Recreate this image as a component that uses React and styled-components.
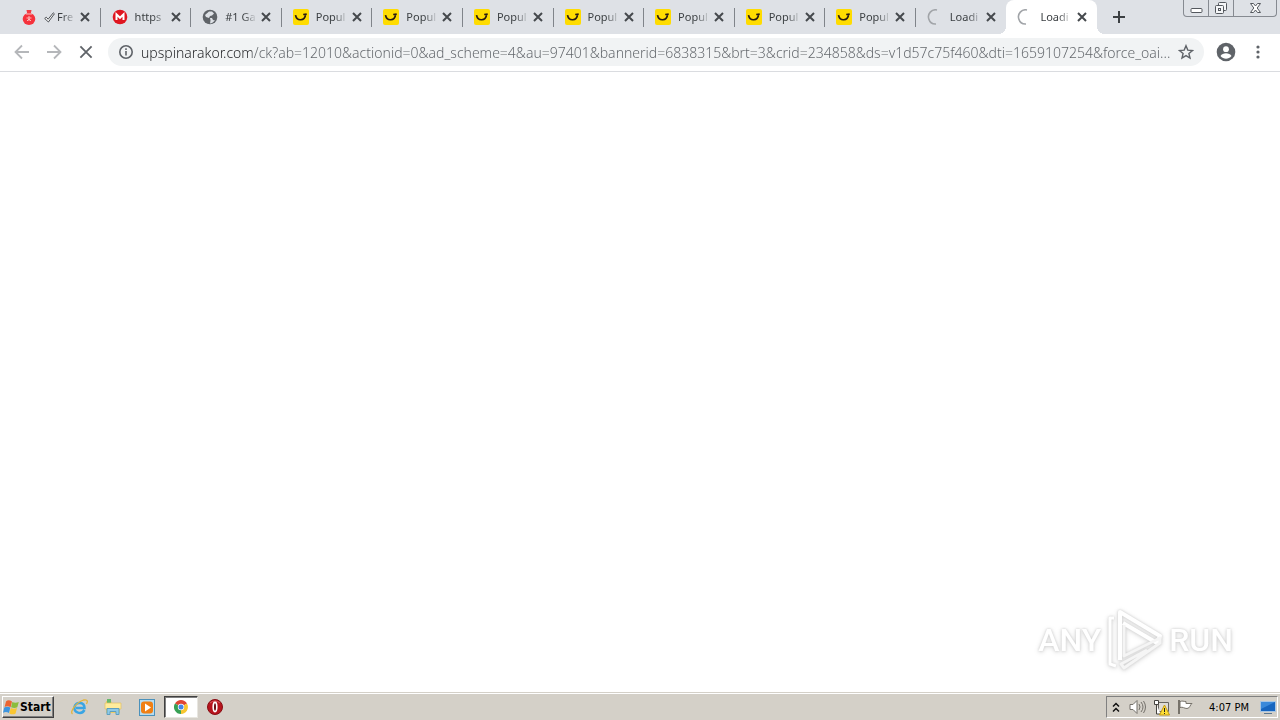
import React from "react";
import styled, { createGlobalStyle, css } from "styled-components";

const Global = createGlobalStyle`
  * { box-sizing: border-box; }
  body { margin: 0; background: #fff; font-family: "Noto Sans", "DejaVu Sans", sans-serif; }
  button { font: inherit; padding: 0; border: 0; background: none; color: inherit; }
  svg { display: block; flex: none; }
`;

const Screen = styled.div`
  min-height: 100vh;
  display: flex;
  flex-direction: column;
`;

const TabStrip = styled.header`
  display: flex;
  height: 34px;
  padding-left: 10px;
  background: #dee1e6;
`;

const Tabs = styled.div`
  flex: 1;
  display: grid;
  grid-template-columns: repeat(12, minmax(0, 1fr));
`;

const Tab = styled.div`
  position: relative;
  display: flex;
  align-items: center;
  padding: 0 9px 0 11px;
  color: #3c4043;
  ${(p) => p.$divided && css`
    &::after {
      content: "";
      position: absolute;
      right: 0;
      top: 8px;
      width: 1px;
      height: 19px;
      background: #80848a;
    }
  `}
  ${(p) => p.$active && css`
    background: #fff;
    border-radius: 8px 8px 0 0;
    &::before, &::after {
      content: "";
      position: absolute;
      bottom: 0;
      width: 8px;
      height: 8px;
    }
    &::before { left: -8px; background: radial-gradient(circle at 0 0, transparent 8px, #fff 8px); }
    &::after { right: -8px; background: radial-gradient(circle at 100% 0, transparent 8px, #fff 8px); }
  `}
`;

const TabTitle = styled.button`
  flex: 1;
  min-width: 0;
  display: flex;
  align-items: center;
  gap: 7px;
  font-size: 11px;
  line-height: 16px;
  white-space: nowrap;
  text-align: left;
`;

const Label = styled.span`
  display: flex;
  align-items: center;
  gap: 2px;
  mask-image: linear-gradient(90deg, #000 18px, transparent 32px);
`;

const IconButton = styled.button`
  display: grid;
  place-items: center;
  width: ${(p) => p.$w || 16}px;
  height: ${(p) => p.$h || 16}px;
  flex: none;
`;

const StripEnd = styled.div`
  display: flex;
  justify-content: space-between;
  width: 183px;
  padding: 0 3px 0 6px;
`;

const WindowControls = styled.div`
  display: flex;
  height: 17px;
  border: 1px solid #868a91;
  border-top: 0;
  border-radius: 0 0 4px 4px;
  & > button + button { border-left: 1px solid #868a91; }
`;

const Toolbar = styled.nav`
  display: flex;
  align-items: center;
  height: 38px;
  padding: 0 6px 1px;
  border-bottom: 1px solid #dadce0;
`;

const Omnibox = styled.label`
  flex: 1;
  min-width: 0;
  display: flex;
  align-items: center;
  gap: 7px;
  height: 28px;
  margin: 0 6px;
  padding: 0 10px;
  border-radius: 14px;
  background: #f1f3f4;
`;

const Address = styled.input`
  flex: 1;
  min-width: 0;
  height: 24px;
  padding: 0;
  border: 0;
  outline: 0;
  font-family: "Noto Sans", sans-serif;
  font-size: 14px;
  font-weight: 300;
  text-overflow: ellipsis;
  color: #5f6368;
  background: linear-gradient(90deg, #202124 111px, #5f6368 111px);
  -webkit-background-clip: text;
  background-clip: text;
  -webkit-text-fill-color: transparent;
`;

const Page = styled.main`
  flex: 1;
  display: flex;
  justify-content: flex-end;
  align-items: flex-end;
  padding: 0 47px 20px;
`;

const Watermark = styled.div`
  display: flex;
  align-items: center;
  gap: 5px;
  color: #fff;
  font-family: Roboto, "Liberation Sans", sans-serif;
  font-size: 32px;
  font-weight: 500;
  line-height: 64px;
  filter: drop-shadow(0 0 1px #d0d0d0) drop-shadow(0 1px 2px #dcdcdc);
`;

const Taskbar = styled.footer`
  display: flex;
  align-items: center;
  height: 28px;
  padding: 1px 2px 0;
  background: #d4d0c8;
  border-top: 1px solid #d4d0c8;
  box-shadow: inset 0 1px #fff;
  font-family: "DejaVu Sans Condensed", "DejaVu Sans", sans-serif;
  font-size: 11px;
  color: #000;
`;

const StartButton = styled.button`
  display: flex;
  align-items: center;
  width: 52px;
  height: 22px;
  margin-right: 8px;
  border: 1px solid;
  border-color: #fff #404040 #404040 #fff;
  box-shadow: inset -1px -1px #808080;
  font-family: "DejaVu Sans Condensed", "DejaVu Sans", sans-serif;
  font-size: 12px;
  font-weight: 700;
`;

const TaskButton = styled.button`
  display: grid;
  place-items: center;
  width: 34px;
  height: 22px;
  ${(p) => p.$pressed && css`
    background: #fff;
    border: 1px solid;
    border-color: #404040 #e8e6e0 #e8e6e0 #404040;
    box-shadow: inset 1px 1px #808080;
  `}
`;

const Tray = styled.div`
  display: flex;
  align-items: center;
  height: 22px;
  margin-left: auto;
  border: 1px solid;
  border-color: #808080 #fff #fff #808080;
`;

const Clock = styled.time`
  width: 62px;
  padding-left: 2px;
  text-align: center;
  white-space: nowrap;
`;

const Cross = ({ size = 10, w = 2, color = "#45494d" }) => (
  <svg width={size} height={size} viewBox="0 0 10 10" stroke={color} strokeWidth={w}><path d="M1 1l8 8M9 1L1 9" /></svg>
);

const Check = () => (
  <svg width="11" height="11" viewBox="0 0 11 11" fill="#f4f5f7" stroke="#3c4043" strokeWidth=".9"><path d="M.7 6.500l1.500-1.300 2 2L9.300.8l1.100 1L4.400 10z" /></svg>
);

const favicons = {
  bag: <><path d="M5.5 1h5L9.8 4.5H6.2z" fill="#f23b43" /><ellipse cx="8" cy="10" rx="6.3" ry="6" fill="#f5323c" /><path d="M5 5h6M8 7v5M5.5 9h5M6 12l2-2 2 2" stroke="#ffb8b6" fill="none" /></>,
  mega: <><circle cx="8" cy="8" r="7.3" fill="#df1620" /><path d="M4.5 11V5.3L8 8.8l3.5-3.5V11" stroke="#fff" strokeWidth="2" fill="none" /></>,
  globe: <><circle cx="8" cy="8" r="7.3" fill="#5f6368" /><path d="M7 2.5h3l2 2-2 2-2 .5-1 2-3-1-1-2zM8 9l2 0 1 2 2 .5-3 2.5-2 .5.5-3z" fill="#dee1e6" /></>,
  smile: <><rect width="16" height="16" rx="2" fill="#ffdc00" /><path d="M2.500 6.200C3.800 12.500 11.800 12.300 12.600 5.300M10.200 5.500l3.500-.4" stroke="#291b14" strokeWidth="1.7" fill="none" /></>,
  loading: <path d="M10 1A7 7 0 0 0 1.8 10a7 7 0 0 0 7.2 5" stroke="#a1a4a8" strokeWidth="1.6" fill="none" />,
};

const tabs = [
  ["bag", <><Check />Fre</>], ["mega", "https"], ["globe", "#1 Ga"],
  ...Array(7).fill(["smile", "Popul"]),
  ["loading", "Loadi"], ["loading", "Loadi"],
];

const Arrow = ({ forward }) => (
  <svg width="16" height="16" viewBox="0 0 16 16" fill="none" stroke="#b5b7ba" strokeWidth="1.8">
    {forward ? <path d="M1 8h13M8 1.5L14.5 8 8 14.5" /> : <path d="M15 8H2M8 1.5L1.5 8 8 14.5" />}
  </svg>
);

const Flag = () => (
  <svg width="17" height="17" viewBox="0 0 17 17">
    <path d="M3 2.500c2-2 4-1 6 0L7.600 8.200C5.500 7 3.500 7 1.600 8z" fill="#ec6532" />
    <path d="M9.300 3c2 1 4 1 6.500 0L14.300 8.300c-2 1-4 1-6.200 0z" fill="#8bbd3b" />
    <path d="M1.300 8.500c2-1 4-1 6 0L6 14c-2-1.400-4-1.200-6-.3z" fill="#3d95df" />
    <path d="M7.800 8.900c2 1 4 1 6.200 0L12.600 14.500c-2 1.300-4 1-6.300 0z" fill="#f9c632" />
  </svg>
);

const Play = () => (
  <svg width="58" height="64" viewBox="0 0 58 64" fill="none" stroke="#fff" strokeWidth="4" strokeLinejoin="round">
    <path d="M8 10H4v46l6 2" strokeWidth="3" />
    <path d="M14 52V4l40 24-3 7-34-20" />
    <path d="M18 17v31l36-18v5L18 60l-3-4 26-14" strokeWidth="3" stroke="#f5f5f5" />
  </svg>
);

export default function App() {
  return (
    <Screen>
      <Global />
      <TabStrip>
        <Tabs>
          {tabs.map(([icon, title], i) => (
            <Tab key={i} $active={i === 11} $divided={i < 10}>
              <TabTitle>
                <svg width="16" height="16" viewBox="0 0 16 16">{favicons[icon]}</svg>
                <Label>{title}</Label>
              </TabTitle>
              <IconButton $w={13} aria-label="Close tab"><Cross /></IconButton>
            </Tab>
          ))}
        </Tabs>
        <StripEnd>
          <IconButton $w={32} $h={34} aria-label="New tab">
            <svg width="12" height="12" viewBox="0 0 12 12" stroke="#3c4043" strokeWidth="2"><path d="M6 0v12M0 6h12" /></svg>
          </IconButton>
          <WindowControls>
            <IconButton $w={24} aria-label="Minimize">
              <svg width="13" height="16" viewBox="0 0 13 16"><rect x="1" y="8.5" width="11" height="4" rx="1" fill="#fff" stroke="#54585e" /></svg>
            </IconButton>
            <IconButton $w={25} aria-label="Restore">
              <svg width="14" height="16" viewBox="0 0 14 16" fill="#f5f6f8" stroke="#54585e"><rect x="4.5" y="2.5" width="8" height="8" rx="1" /><rect x="1.5" y="5.5" width="8" height="8" rx="1" /><rect x="4.5" y="8.5" width="2" height="2" /></svg>
            </IconButton>
            <IconButton $w={43} aria-label="Close">
              <svg width="13" height="16" viewBox="0 0 13 16"><path d="M1.5 3.5h3l2 2.5 2-2.5h3L8.2 8l3.3 4.5h-3l-2-2.5-2 2.5h-3L4.8 8z" fill="#fff" stroke="#54585e" /></svg>
            </IconButton>
          </WindowControls>
        </StripEnd>
      </TabStrip>
      <Toolbar>
        <IconButton $w={32} $h={32} aria-label="Back"><Arrow /></IconButton>
        <IconButton $w={32} $h={32} aria-label="Forward"><Arrow forward /></IconButton>
        <IconButton $w={32} $h={32} aria-label="Stop"><Cross size={14} w={1.3} color="#5f6368" /></IconButton>
        <Omnibox>
          <svg width="16" height="16" viewBox="0 0 16 16" fill="none" stroke="#5f6368" strokeWidth="1.6"><circle cx="8" cy="8" r="6.2" /><path d="M8 7v4.5M8 4.3v1.6" /></svg>
          <Address aria-label="Address" defaultValue="upspinarakor.com/ck?ab=12010&actionid=0&ad_scheme=4&au=97401&bannerid=6838315&brt=3&crid=234858&ds=v1d57c75f460&dti=1659107254&force_oai..." />
          <IconButton aria-label="Bookmark">
            <svg width="16" height="16" viewBox="0 0 16 16" fill="none" stroke="#5f6368" strokeWidth="1.4"><path d="M8 1.7l1.8 4.4 4.7.4-3.6 3 1.1 4.6L8 11.6l-4 2.5 1.1-4.6-3.6-3 4.7-.4z" /></svg>
          </IconButton>
        </Omnibox>
        <IconButton $w={32} $h={32} aria-label="Profile">
          <svg width="20" height="20" viewBox="0 0 20 20"><circle cx="10" cy="10" r="9.3" fill="#5f6368" /><circle cx="10" cy="7.2" r="2.9" fill="#fff" /><path d="M4.5 14c2-3.6 9-3.6 11 0-3 3.6-8 3.6-11 0z" fill="#fff" /></svg>
        </IconButton>
        <IconButton $w={32} $h={32} aria-label="Menu">
          <svg width="4" height="16" viewBox="0 0 4 16" fill="#5f6368"><circle cx="2" cy="3" r="1.6" /><circle cx="2" cy="8" r="1.6" /><circle cx="2" cy="13" r="1.6" /></svg>
        </IconButton>
      </Toolbar>
      <Page>
        <Watermark><span>ANY</span><Play /><span>RUN</span></Watermark>
      </Page>
      <Taskbar>
        <StartButton><Flag />Start</StartButton>
        <TaskButton aria-label="Internet Explorer">
          <svg width="18" height="18" viewBox="0 0 18 18" fill="none"><path d="M14.5 12c-3 5-11 3-10-3 1-6 10-5 10 1H6" stroke="#39a5e4" strokeWidth="2.5" /><path d="M2.5 16c-3-2 3-11 11-14 5-1 4 2 3 4" stroke="#e3b43a" strokeWidth="1.3" /></svg>
        </TaskButton>
        <TaskButton aria-label="Explorer">
          <svg width="18" height="18" viewBox="0 0 18 18"><path d="M2 3h5l1 2h8v10H2z" fill="#edcc66" /><path d="M3 1h4v4H3z" fill="#67b96b" /><path d="M1 5h16v6H1z" fill="#ffec9c" stroke="#dfc069" strokeWidth=".7" /><path d="M3 16.500v-6h12v6h-3v-3H6v3z" fill="#8ec9e6" stroke="#5d9fc0" /></svg>
        </TaskButton>
        <TaskButton aria-label="Media Player">
          <svg width="16" height="17" viewBox="0 0 16 17"><rect x=".5" y=".5" width="15" height="16" fill="#b6dcf1" stroke="#4b91bb" /><rect x="2" y="2.5" width="12" height="12" rx="3" fill="#f07f13" /><path d="M6 4.5l6 4-6 4z" fill="#fff" /></svg>
        </TaskButton>
        <TaskButton $pressed aria-label="Chrome">
          <svg width="14" height="14" viewBox="0 0 14 14"><path d="M7 7L1 3.4A7 7 0 0 1 13 3.5z" fill="#df4634" /><path d="M7 7l6-3.5A7 7 0 0 1 7 14z" fill="#f7c630" /><path d="M7 7v7A7 7 0 0 1 1 3.4z" fill="#38a155" /><circle cx="7" cy="7" r="3.2" fill="#fff" /><circle cx="7" cy="7" r="2.5" fill="#4386e8" /></svg>
        </TaskButton>
        <TaskButton aria-label="Opera">
          <svg width="16" height="16" viewBox="0 0 16 16"><circle cx="8" cy="8" r="7.5" fill="#b7141d" stroke="#870d13" /><path d="M3 4q5-4 10 0" stroke="#d95b60" fill="none" /><ellipse cx="8" cy="8" rx="1.8" ry="4.6" fill="#681015" stroke="#fff" strokeWidth="1.6" /></svg>
        </TaskButton>
        <Tray>
          <IconButton $w={18} aria-label="Show hidden icons">
            <svg width="8" height="11" viewBox="0 0 8 11" fill="none" stroke="#111" strokeWidth="1.5"><path d="M1 4.5l3-3 3 3M1 9.5l3-3 3 3" /></svg>
          </IconButton>
          <IconButton $w={24} aria-label="Volume">
            <svg width="17" height="16" viewBox="0 0 17 16" fill="none" stroke="#74716b"><path d="M1 5.5h3l4-4v13l-4-4H1z" fill="#fff" /><path d="M10 5q2 3 0 6M12 3q4 5 0 10M14.5 2q4 6 0 12" /></svg>
          </IconButton>
          <IconButton $w={24} aria-label="Network">
            <svg width="17" height="17" viewBox="0 0 17 17"><path d="M5.5 3.5h10v9h-10z" fill="#dedbd5" stroke="#66645f" /><path d="M1.500 1.500h4v4h-4zM3.500 5v10h4" fill="#fff" stroke="#45433f" /><path d="M11.5 6l5 10h-10z" fill="#ffdf35" stroke="#c49912" /><path d="M11.5 9v4M11.5 14v1" stroke="#222" /></svg>
          </IconButton>
          <IconButton $w={24} aria-label="Action Center">
            <svg width="16" height="16" viewBox="0 0 16 16"><path d="M3 2.500c3-1 3 0 6 0v2h6c-2 1-2 5-5 5-3 0-4-2-7-1z" fill="#fff" stroke="#77736b" /><path d="M2 1v14" stroke="#77736b" strokeWidth="2" /></svg>
          </IconButton>
          <Clock>4:07 PM</Clock>
          <IconButton $w={18} aria-label="Show desktop">
            <svg width="16" height="13" viewBox="0 0 16 13"><rect x=".5" y=".5" width="15" height="10" fill="#1765bf" stroke="#a7c5e3" /><path d="M1 1h14L1 8z" fill="#3a89da" /><path d="M4 12.5h8" stroke="#5c778f" /></svg>
          </IconButton>
        </Tray>
      </Taskbar>
    </Screen>
  );
}
